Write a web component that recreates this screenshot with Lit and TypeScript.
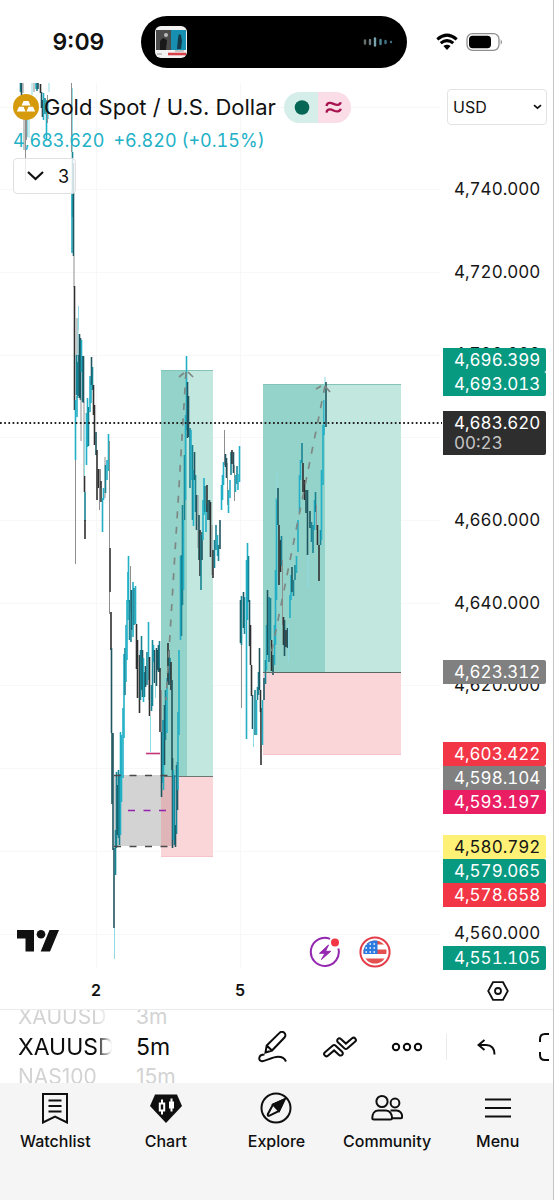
import { LitElement, html, svg, css } from "lit";
import { customElement, state } from "lit/decorators.js";

const CHART_TOP = 83;
const CHART_HEIGHT = 887;

const INK: Record<string, string> = {
  c: "#22b0c6",
  l: "#8fdbe3",
  t: "#178494",
  k: "#1f5560",
  d: "#2f2f2f",
  g: "#8f8f8f",
};

/* Each bar: x, high, low, ink */
const BARS = `
20.5 83 92 t;21.5 83 95 k;23 83 93 g;24 96 150 g;25.5 112 139 g;26.5 118 140 g;25.5 139 181 g;27.5 100 137 l;29 96 138 l;
32 83 95 l;34 83 92 g;36 83 89 c;37 83 91 t;38 83 89 k;40.5 84 93 d;41.5 92 108 k;42.5 100 117 d;43.5 93 120 c;
45 98 114 t;46.5 100 139 c;47.5 95 123 g;49 83 92 l;48.5 104 119 l;
71.5 83 152 g;72.5 88 200 l;72.5 152 217 t;72 190 253 c;73.5 163 256 k;74 256 287 g;74.5 286 312 d;74.5 312 410 d;
78.5 306 330 l;77 318 356 g;78 318 356 l;76.5 355 395 t;77.5 362 398 t;78.5 355 396 t;79.5 334 398 k;80.5 338 400 k;
81.5 340 372 c;82.5 356 402 t;83.5 356 403 k;75.5 400 460 c;77 396 417 c;75.5 460 564 g;81 398 441 g;84 402 476 g;
84.5 425 476 l;84.5 476 492 d;85 492 521 t;85 520 539 d;86.5 413 465 c;87.5 398 447 c;88.5 407 446 t;90 376 412 c;
91 380 403 c;91.5 357 385 k;92.5 367 390 t;93.5 385 415 d;94.5 405 445 d;96 432 455 k;97 450 500 d;98.5 469 488 d;
99.5 469 510 g;100.5 469 488 g;101 481 502 d;102.5 498 532 c;103.5 488 500 c;105 457 498 g;105.5 465 493 t;107 460 480 c;
108.5 434 471 c;109.5 441 548 g;110 548 592 d;109.5 592 614 g;111 612 650 d;111.5 648 733 k;112 733 804 k;113 733 850 k;
114 848 928 k;114.5 928 959 l;115.5 830 875 t;116.5 772 848 t;117.5 785 835 k;118.5 770 838 t;119.5 774 845 t;
120.5 732 835 c;121.5 735 802 c;123 708 778 c;124 654 738 c;125 648 695 t;126 625 682 c;127 600 660 c;128 572 620 c;
128.5 556 602 c;129.5 600 640 t;130.5 566 612 g;131 590 642 t;132 590 630 k;133 582 637 c;134 588 625 t;135.5 586 624 c;
136.5 624 669 d;137.5 640 698 d;139.5 655 713 d;140.5 650 700 t;141.5 636 690 t;142.5 650 697 k;143.5 658 702 c;
144.5 672 697 t;145.5 666 687 k;147 652 685 t;148.5 622 680 c;149 658 700 g;149.5 657 716 d;150.5 716 752 l;
151.5 685 711 t;152.5 640 706 t;153.5 645 662 c;154.5 650 683 k;155.5 680 698 l;156.5 648 686 k;157.5 650 670 k;
158.5 645 672 k;159.5 641 672 t;160 668 732 d;161.5 690 740 g;161.5 732 797 k;163 720 783 t;163.5 720 790 c;
164.5 705 765 k;165.5 690 740 t;167 678 733 c;168 643 684 d;169 650 685 k;170 658 680 t;171 662 690 d;172 680 770 k;
172.5 758 848 k;173.5 770 840 c;174.5 775 845 t;175.5 825 847 k;176.5 765 834 t;177.5 762 810 k;178 712 790 c;
179 650 735 c;180.5 556 640 c;181.5 555 636 t;182.5 505 605 t;183.5 520 590 c;184.5 455 520 t;185.5 415 500 c;
186.5 356 430 c;187.5 382 438 k;188.5 396 437 k;190 428 488 t;191 430 480 c;192.5 445 520 t;193.5 470 526 c;
194.5 452 480 k;195.5 475 512 t;196.5 495 530 k;198 495 548 g;199 515 560 k;200 530 576 d;201 535 590 t;202 532 560 k;
203 500 540 c;204 478 515 c;205 486 512 t;206 505 532 c;207 485 512 d;208 500 520 k;209.5 500 520 k;210.5 502 557 d;
212 525 575 g;213 550 578 d;214.5 540 568 t;216 525 550 t;217.5 535 556 c;218.5 545 561 t;220 520 549 k;221.5 485 510 c;
222.5 475 500 c;223.5 462 485 c;224.5 430 465 g;225.5 454 467 k;226.5 458 478 k;227.5 463 505 g;228.5 490 513 c;
230 480 498 c;231 452 475 t;232 450 464 d;233.5 452 473 k;234.5 465 501 g;235.5 475 492 c;237 466 484 t;238 474 490 c;
239.5 446 482 c;
240.5 600 643 k;241.5 596 645 t;241.5 645 708 g;243.5 592 628 k;244.5 597 634 t;246.5 560 739 c;247.5 543 620 c;
248.5 556 602 t;249.5 600 646 k;250.5 625 665 d;251.5 665 696 d;252.5 695 729 k;253.5 700 747 l;255 690 735 t;
256.5 700 735 c;257.5 687 700 t;258.5 672 695 t;259.5 648 690 k;260.5 690 712 d;261 708 765 d;262.5 700 745 c;
264 678 700 k;265.5 660 684 t;266.5 625 670 c;267.5 590 655 k;269 597 662 t;270.5 598 640 t;271.5 640 671 d;
273 655 675 k;274.5 625 665 c;275.5 570 645 c;276.5 498 600 c;277 473 500 l;278 488 525 k;279 525 585 d;
280.5 540 572 d;281.5 536 566 t;282.5 560 625 g;283.5 617 645 d;284.5 620 656 k;286 630 647 d;287.5 628 648 k;
288.5 624 662 l;290 595 618 c;291 575 600 c;292 567 592 k;293.5 580 596 t;295 565 580 t;296.5 556 573 c;
298 520 552 c;299.5 475 512 c;300.5 460 480 c;302 443 463 t;303 463 492 d;304.5 480 500 d;306 490 513 k;
307.5 490 555 k;308 555 588 l;310 511 528 k;311.5 522 542 t;313 525 553 t;314.5 500 530 c;315.5 492 512 t;
316.5 505 530 g;317.5 525 545 d;319 545 581 d;320.5 530 545 t;321.5 470 540 c;323 425 485 c;324 400 435 c;
325 377 425 l;326 382 427 k`
  .split(";")
  .map((row) => row.trim().split(" "))
  .map(([x, high, low, ink]) => ({ x: +x, high: +high, low: +low, ink }));

const GRID_ROWS = [107, 189, 272, 355, 437, 520, 603, 685, 768, 851, 934];
const GRID_COLUMNS = [96, 240];

interface PriceLabel {
  y: number;
  price: string;
  tone?: string;
  timer?: string;
}

const PRICE_LABELS: PriceLabel[] = [
  { y: 189, price: "4,740.000" },
  { y: 272, price: "4,720.000" },
  { y: 354, price: "4,700.000" },
  { y: 520, price: "4,660.000" },
  { y: 603, price: "4,640.000" },
  { y: 685, price: "4,620.000" },
  { y: 933, price: "4,560.000" },
  { y: 360, price: "4,696.399", tone: "green" },
  { y: 384, price: "4,693.013", tone: "green" },
  { y: 433, price: "4,683.620", tone: "black", timer: "00:23" },
  { y: 672, price: "4,623.312", tone: "gray" },
  { y: 754, price: "4,603.422", tone: "red" },
  { y: 778, price: "4,598.104", tone: "gray" },
  { y: 802, price: "4,593.197", tone: "pink" },
  { y: 847, price: "4,580.792", tone: "yellow" },
  { y: 871, price: "4,579.065", tone: "green" },
  { y: 895, price: "4,578.658", tone: "red" },
  { y: 958, price: "4,551.105", tone: "green" },
];

@customElement("status-bar")
class StatusBar extends LitElement {
  static styles = css`
    :host {
      display: grid;
      grid-template-columns: 141fr 267fr 146fr;
      align-items: center;
      height: 52px;
      padding: 16px 0 15px;
    }
    .time {
      padding-left: 16px;
      text-align: center;
      font-size: 23px;
      font-weight: 600;
    }
    .island {
      display: flex;
      align-items: center;
      justify-content: space-between;
      height: 52px;
      padding: 0 14px;
      border-radius: 26px;
      background: #000;
      box-sizing: border-box;
    }
    .signals {
      display: flex;
      align-items: center;
      gap: 8px;
      padding-left: 29px;
    }
    svg {
      display: block;
    }
  `;

  render() {
    return html`
      <div class="time">9:09</div>
      <div class="island">
        <svg width="32" height="32" viewBox="0 0 32 32" aria-hidden="true">
          <rect width="32" height="32" rx="6" fill="#f2f2f2" />
          <rect x="1" y="4" width="15" height="20" fill="#4b4b4b" />
          <rect x="16" y="4" width="15" height="20" fill="#168fb0" />
          <path d="M5 24v-9l3-3 4 2-1 10z" fill="#191919" />
          <circle cx="11" cy="9" r="2" fill="#bbb" />
          <path d="M22 23l1-11 1-4 2 1 1 6-1 8z" fill="#123b4b" />
          <path d="M2 28h5M20 25h9" stroke="#999" />
          <path d="M13 28h18" stroke="#d8404a" stroke-width="2.6" />
        </svg>
        <svg width="30" height="10" viewBox="0 0 30 10" aria-hidden="true" stroke-width="2.4" stroke-linecap="round">
          <path d="M2 3.500v3" stroke="#66706f" />
          <path d="M7 3v4" stroke="#6a7c80" />
          <path d="M12 1.500v7" stroke="#7ba3ad" />
          <path d="M17.500 3v4" stroke="#4e8496" />
          <path d="M22.500 4v2" stroke="#3d7388" />
          <path d="M28 5v.1" stroke="#3d7388" />
        </svg>
      </div>
      <div class="signals">
        <svg width="22" height="18" viewBox="0 0 22 18" aria-hidden="true" fill="none" stroke="#000" stroke-width="3">
          <path d="M1.300 6.300Q11 -2 20.700 6.300" />
          <path d="M4.700 10.200Q11 5 17.300 10.200" />
          <path d="M11 17L7.400 13.100Q11 10.300 14.600 13.100Z" fill="#000" stroke="none" />
        </svg>
        <svg width="37" height="18" viewBox="0 0 37 18" aria-hidden="true">
          <rect x="1" y=".7" width="32" height="16.600" rx="5.500" fill="none" stroke="#8e8e8e" stroke-width="1.300" />
          <rect x="3" y="2.800" width="22" height="12.400" rx="3.600" fill="#000" />
          <path d="M34.700 6.200q2.600 2.800 0 5.600z" fill="#8e8e8e" />
        </svg>
      </div>
    `;
  }
}

@customElement("price-chart")
class PriceChart extends LitElement {
  static styles = css`
    :host {
      display: block;
    }
    .plot {
      display: block;
      width: 100%;
      height: auto;
    }
  `;

  render() {
    return html`
      <svg class="plot" viewBox="0 ${CHART_TOP} 442 ${CHART_HEIGHT}" role="img" aria-label="Gold Spot price chart">
        <g stroke="#f7f7f7">
          ${GRID_ROWS.map((y) => svg`<path d="M0 ${y + 0.5}H440" />`)}
          ${GRID_COLUMNS.map((x) => svg`<path d="M${x + 0.5} 83V968" />`)}
        </g>
        <rect x="114" y="775" width="60" height="71" fill="#d3d3d3" />
        <rect x="161" y="370" width="52" height="407" fill="#c2e7df" />
        <rect x="161" y="370" width="26" height="407" fill="#94d3c9" />
        <path d="M161 370.500H213" stroke="#82c4b8" />
        <rect x="161" y="777" width="52" height="80" fill="#fad6d9" />
        <rect x="161" y="777" width="13" height="69" fill="#dfb5b7" />
        <path d="M161 856.500H213" stroke="#f5c3c8" />
        <path d="M161 776.500H213" stroke="#6f7775" />
        <rect x="263" y="384" width="138" height="288" fill="#c2e7df" />
        <rect x="263" y="384" width="62" height="288" fill="#94d3c9" />
        <path d="M263 384.500H401" stroke="#82c4b8" />
        <rect x="263" y="672" width="138" height="83" fill="#fad6d9" />
        <path d="M263 754.500H401" stroke="#f5c3c8" />
        <g>
          ${BARS.map(
            (b) =>
              svg`<path d="M${b.x} ${b.high}V${b.low}" stroke=${INK[b.ink]} stroke-width=${
                b.ink === "g" || b.ink === "l" ? 1 : 1.6
              } />`
          )}
        </g>
        <path d="M263 672.500H401" stroke="#5c6664" />
        <g fill="none" stroke="#7d8784" stroke-width="1.700">
          <path d="M186 372L166 700" stroke-dasharray="7 8.500" />
          <path d="M179 377l5-4M188 372l5 5" />
          <path d="M325 386L270 660" stroke-dasharray="7 8.500" />
          <path d="M316 389l5-3M325 386l5 6" />
        </g>
        <path d="M114 775.500H174M114 846.500H174" stroke="#4a4a4a" stroke-width="1.400" stroke-dasharray="7 8.500" />
        <path d="M128 810.500H168" stroke="#9520ad" stroke-width="1.500" stroke-dasharray="7 8.500" />
        <path d="M146 753.500H160" stroke="#c2357a" stroke-width="1.600" />
        <path d="M0 423H442" stroke="#222" stroke-width="1.800" stroke-dasharray="1.700 2.500" />
      </svg>
    `;
  }
}

@customElement("price-axis")
class PriceAxis extends LitElement {
  static styles = css`
    :host {
      display: block;
      position: relative;
    }
    .currency {
      display: grid;
      align-items: center;
      margin: 6px 6px 0 5px;
    }
    .currency select,
    .currency svg {
      grid-area: 1 / 1;
    }
    .currency select {
      width: 100%;
      height: 36px;
      padding: 0 5px;
      border: 1px solid #e3e3e6;
      border-radius: 4px;
      background: #fff;
      color: #111;
      font: inherit;
      font-size: 16px;
      appearance: none;
    }
    .currency svg {
      justify-self: end;
      margin-right: 5px;
      pointer-events: none;
    }
    .label {
      position: absolute;
      left: 1px;
      right: 7px;
      padding: 0 11px;
      transform: translateY(-50%);
      border-radius: 0 2px 2px 0;
      color: #161616;
      font-size: 17px;
      font-variant-numeric: tabular-nums;
      line-height: 24px;
      white-space: nowrap;
    }
    .green, .black, .gray, .red, .pink {
      color: #fff;
    }
    .green { background: #089981; }
    .gray { background: #808080; }
    .red { background: #f23645; }
    .pink { background: #e91e63; }
    .yellow { background: #fff176; }
    .black {
      padding: 2px 11px;
      background: #2e2e2e;
      line-height: 20px;
    }
    .timer {
      display: block;
      color: #c4c4c4;
    }
  `;

  render() {
    return html`
      <div class="currency">
        <select aria-label="Currency">
          <option>USD</option>
          <option>EUR</option>
        </select>
        <svg width="9" height="6" viewBox="0 0 9 6" fill="none" stroke="#111" stroke-width="1.700" aria-hidden="true">
          <path d="M1 1.200l3.500 3 3.500-3" />
        </svg>
      </div>
      ${PRICE_LABELS.map(
        (l) => html`
          <div class="label ${l.tone ?? ""}" style="top:${((l.y - CHART_TOP) / CHART_HEIGHT) * 100}%">
            ${l.price}${l.timer ? html`<span class="timer">${l.timer}</span>` : ""}
          </div>
        `
      )}
    `;
  }
}

@customElement("chart-legend")
class ChartLegend extends LitElement {
  @state() private open = false;

  static styles = css`
    :host {
      display: flex;
      flex-direction: column;
      align-items: flex-start;
    }
    .title {
      display: flex;
      align-items: center;
      height: 32px;
    }
    h1 {
      margin: 0 8px 0 5px;
      font-size: 22px;
      font-weight: 400;
      white-space: nowrap;
    }
    .market {
      display: flex;
      overflow: hidden;
      border-radius: 16px;
    }
    .market svg {
      display: block;
    }
    .quote {
      display: flex;
      gap: 9px;
      margin: 6px 0 5px;
      color: #22b1c6;
      font-size: 18px;
      font-variant-numeric: tabular-nums;
      line-height: 24px;
      white-space: nowrap;
    }
    button {
      display: flex;
      align-items: center;
      gap: 14px;
      height: 36px;
      padding: 0 6px 0 13px;
      border: 1px solid #e0e0e3;
      border-radius: 4px;
      background: rgba(255, 255, 255, 0.8);
      color: #111;
      font: inherit;
      font-size: 18px;
    }
  `;

  render() {
    return html`
      <div class="title">
        <svg width="26" height="26" viewBox="0 0 26 26" aria-hidden="true">
          <circle cx="13" cy="13" r="13" fill="#d59b0d" />
          <path d="M10.500 7h5l2 4.500h-9zM6 12.800h4.500l2 4.700H3.800zM15.500 12.800H20l2.200 4.700h-8.700z" fill="#fff" />
        </svg>
        <h1>Gold Spot / U.S. Dollar</h1>
        <div class="market">
          <svg width="34" height="31" viewBox="0 0 34 31" role="img" aria-label="Market open">
            <rect width="34" height="31" fill="#d6eee9" />
            <circle cx="18" cy="15.500" r="7.300" fill="#056656" />
          </svg>
          <svg width="33" height="31" viewBox="0 0 33 31" role="img" aria-label="Approximate data">
            <rect width="33" height="31" fill="#fbdde8" />
            <path
              d="M8.500 14q.5-3.300 3.500-3.200c3 .2 5 2.600 8 2 2-.4 2.500-1.400 2.700-2.600M8.500 20.600q.5-3.300 3.500-3.200c3 .2 5 2.600 8 2 2-.4 2.500-1.400 2.700-2.600"
              fill="none" stroke="#a8124f" stroke-width="2.300" />
          </svg>
        </div>
      </div>
      <div class="quote"><span>4,683.620</span><span>+6.820 (+0.15%)</span></div>
      <button aria-expanded=${this.open} @click=${() => (this.open = !this.open)}>
        <svg width="17" height="10" viewBox="0 0 17 10" fill="none" stroke="#111" stroke-width="2.200" aria-hidden="true">
          <path d="M1 1l7.500 7L16 1" />
        </svg>
        3
      </button>
    `;
  }
}

@customElement("chart-toolbar")
class ChartToolbar extends LitElement {
  static styles = css`
    :host {
      display: flex;
      align-items: center;
      height: 73px;
      overflow: hidden;
      border-top: 1px solid #ebebeb;
      background: #fff;
    }
    .wheel {
      display: flex;
      flex: none;
      flex-direction: column;
      width: 94px;
      margin-left: 18px;
      overflow: hidden;
    }
    .interval {
      margin-left: 24px;
    }
    .symbol {
      mask-image: linear-gradient(to right, #000 82%, transparent 100%);
    }
    .wheel button {
      height: 30px;
      font-size: 21px;
      text-align: left;
      color: #d3d3d3;
      white-space: nowrap;
    }
    .wheel .current {
      color: #0c0c0c;
      font-size: 23px;
    }
    button {
      padding: 0;
      border: 0;
      background: none;
      color: #111;
      font: inherit;
    }
    .tools {
      display: flex;
      flex: 1;
      align-items: center;
      justify-content: flex-end;
      margin-right: 2px;
    }
    .tool {
      display: grid;
      place-items: center;
      flex: none;
      width: 67px;
      height: 48px;
    }
    .divider {
      width: 1px;
      height: 26px;
      margin: 0 6px;
      background: #ebebeb;
    }
    .edge {
      width: 12px;
      margin-left: 19px;
      justify-items: start;
      overflow: hidden;
    }
    svg {
      display: block;
      fill: none;
      stroke: #0c0c0c;
      stroke-width: 2;
    }
  `;

  render() {
    return html`
      <div class="wheel symbol">
        <button>XAUUSD</button>
        <button class="current">XAUUSD</button>
        <button>NAS100</button>
      </div>
      <div class="wheel interval">
        <button>3m</button>
        <button class="current">5m</button>
        <button>15m</button>
      </div>
      <div class="tools">
        <button class="tool" aria-label="Draw">
          <svg width="30" height="32" viewBox="0 0 30 32">
            <path d="M7.500 21.500L8.700 14.500L21.500 1.900a3.200 3.200 0 0 1 5 4.600L14 19.500zM8.700 14.500l5.300 5M6.500 23.500C3 23.500 1.500 25 1.300 27c-.2 2 1 3.400 3 3.200C8.500 29.500 15 25.800 20 25.800c4 0 6.500 1.200 8 4.700" />
          </svg>
        </button>
        <button class="tool" aria-label="Patterns">
          <svg width="34" height="22" viewBox="0 0 34 22">
            <path d="M2 16.200L9.800 9.500a2 2 0 0 1 2.600 0l6.700 6.200a2.200 2.200 0 0 1-3 3.300l-5-4.600L4.900 19.700a2.200 2.200 0 0 1-2.900-3.500zM32 5.800L24.200 12.500a2 2 0 0 1-2.600 0l-6.700-6.200a2.200 2.200 0 0 1 3-3.300l5 4.600L29.100 2.300a2.200 2.200 0 0 1 2.900 3.500z" />
          </svg>
        </button>
        <button class="tool" aria-label="More">
          <svg width="32" height="10" viewBox="0 0 32 10">
            <circle cx="5" cy="5" r="3.200" /><circle cx="16" cy="5" r="3.200" /><circle cx="27" cy="5" r="3.200" />
          </svg>
        </button>
        <span class="divider"></span>
        <button class="tool" aria-label="Undo">
          <svg width="19" height="16" viewBox="0 0 19 16">
            <path d="M7.500 1L1.500 6l6 5M1.500 6H9c6 0 8.500 3.500 8.500 9.500" />
          </svg>
        </button>
        <button class="tool edge" aria-label="Fullscreen">
          <svg width="28" height="28" viewBox="0 0 28 28">
            <path d="M1 9V6q0-5 5-5h4M1 19v3q0 5 5 5h4M27 9V6q0-5-5-5h-4M27 19v3q0 5-5 5h-4" />
          </svg>
        </button>
      </div>
    `;
  }
}

const TABS = [
  {
    name: "Watchlist",
    icon: svg`<path d="M4 2h24v28.500l-12-6-12 6zM9.500 8.500h13M9.500 14h13M9.500 19.500h13" />`,
  },
  {
    name: "Chart",
    icon: svg`<path d="M5 2.500h22L32 14 16 31 0 14z" fill="#0f0f0f" stroke="none" />
      <path d="M12 7.500v4M12 18.500v4M9.800 11.500h4.400v7H9.800zM21.500 6.500v13" stroke="#fff" />
      <path d="M21.500 9.500v7" stroke="#fff" stroke-width="5" />`,
  },
  {
    name: "Explore",
    icon: svg`<circle cx="16" cy="16" r="14.500" />
      <path d="M24.500 7.500L13 12.500 19 19z" fill="#0f0f0f" />
      <path d="M24.500 7.500L13 12.500 7.800 22.200q-.4 1.800 1.300 1.600L19 19z" />`,
  },
  {
    name: "Community",
    icon: svg`<circle cx="11" cy="9.500" r="5.600" /><circle cx="24" cy="11" r="4.400" />
      <path d="M7 18.500h8c4 0 6 4 6 7.500 0 1-.7 1.500-1.700 1.500H3c-1 0-1.700-.5-1.700-1.500 0-3.500 1.700-7.500 5.700-7.500zM19.500 18.500h6c3.500 0 5.700 3 5.700 6.300 0 1-.7 1.500-1.700 1.500h-8.200" />`,
  },
  {
    name: "Menu",
    icon: svg`<path d="M3 7.500h26M3 16h26M3 24.500h26" />`,
  },
];

@customElement("tab-bar")
class TabBar extends LitElement {
  static styles = css`
    :host {
      display: block;
      background: #f5f5f5;
    }
    nav {
      display: grid;
      grid-template-columns: repeat(5, 1fr);
      padding: 9px 0 49px;
    }
    a {
      display: flex;
      flex-direction: column;
      align-items: center;
      gap: 7px;
      color: #0f0f0f;
      font-size: 16px;
      font-weight: 500;
      line-height: 20px;
      text-decoration: none;
    }
    svg {
      fill: none;
      stroke: #0f0f0f;
      stroke-width: 2;
    }
  `;

  render() {
    return html`
      <nav>
        ${TABS.map(
          (t) => html`
            <a href="#${t.name.toLowerCase()}">
              <svg width="32" height="32" viewBox="0 0 32 32" aria-hidden="true">${t.icon}</svg>
              ${t.name}
            </a>
          `
        )}
      </nav>
    `;
  }
}

@customElement("app-root")
class AppRoot extends LitElement {
  static styles = css`
    :host {
      display: flex;
      flex-direction: column;
      min-height: 100vh;
      box-sizing: border-box;
      border-right: 1px solid #c4c4c4;
      background: #fff;
      color: #111;
      font-family: Inter, "Liberation Sans", sans-serif;
    }
    .chart {
      display: grid;
      grid-template-columns: 1fr 111px;
    }
    price-chart,
    .overlay {
      grid-area: 1 / 1;
    }
    .overlay {
      z-index: 1;
      display: flex;
      flex-direction: column;
      justify-content: space-between;
      padding: 8px 51px 2px 13px;
    }
    .marks {
      display: flex;
      align-items: flex-end;
      gap: 18px;
      padding-left: 4px;
    }
    .logo {
      margin: 0 auto 16px 0;
    }
    .round {
      padding: 0;
      border: 0;
      background: none;
    }
    svg {
      display: block;
    }
    .times {
      display: grid;
      grid-template-columns: 192fr 96fr 154fr 111px;
      align-items: center;
      height: 39px;
      text-align: center;
      font-size: 16px;
      font-weight: 600;
    }
    .settings {
      grid-column: 4;
      justify-self: center;
      padding: 2px 0 0;
      border: 0;
      background: none;
    }
    tab-bar {
      flex: 1;
    }
  `;

  render() {
    return html`
      <status-bar></status-bar>
      <main class="chart">
        <price-chart></price-chart>
        <div class="overlay">
          <chart-legend></chart-legend>
          <div class="marks">
            <svg class="logo" width="42" height="22" viewBox="0 0 42 22" role="img" aria-label="TradingView">
              <path d="M0 0h17v21.500H8.500V8.500H0zM32.500 0H42l-9 21.500h-9.300z" fill="#111" />
              <circle cx="24" cy="4.300" r="4.300" fill="#111" />
            </svg>
            <button class="round" aria-label="Latest updates">
              <svg width="32" height="32" viewBox="0 0 32 32" fill="none">
                <path d="M21 2.900A14 14 0 1 0 29.400 12.500" stroke="#9427b0" stroke-width="2" />
                <path d="M19.500 9L10.500 17.300h5.500L12.500 23.500l9.200-8.200h-5.200z" fill="#9427b0" stroke="#9427b0" stroke-linejoin="round" />
                <circle cx="26" cy="6.500" r="4" fill="#f23645" />
              </svg>
            </button>
            <button class="round" aria-label="Economic events">
              <svg width="32" height="32" viewBox="0 0 32 32">
                <clipPath id="flag"><circle cx="16" cy="16" r="11.500" /></clipPath>
                <circle cx="16" cy="16" r="14.600" fill="#fff" stroke="#e33d49" stroke-width="2" />
                <g clip-path="url(#flag)">
                  <path d="M4 4h24v4.500H4zM4 13.500h24v4.500H4zM4 22.500h24v6H4z" fill="#e2504f" />
                  <path d="M4 4h14.500v14H4z" fill="#2e7be0" />
                  <path d="M6.500 8h11M6.500 12h11M6.500 16h11" stroke="#fff" stroke-width="1.500" stroke-dasharray="1.500 2.500" />
                </g>
              </svg>
            </button>
          </div>
        </div>
        <price-axis></price-axis>
      </main>
      <div class="times">
        <span>2</span>
        <span>5</span>
        <button class="settings" aria-label="Chart settings">
          <svg width="22" height="20" viewBox="0 0 22 20" fill="none" stroke="#111" stroke-width="1.800">
            <path d="M6 1.200h10L20.800 10 16 18.800H6L1.200 10z" />
            <circle cx="11" cy="10" r="3" />
          </svg>
        </button>
      </div>
      <chart-toolbar></chart-toolbar>
      <tab-bar></tab-bar>
    `;
  }
}
